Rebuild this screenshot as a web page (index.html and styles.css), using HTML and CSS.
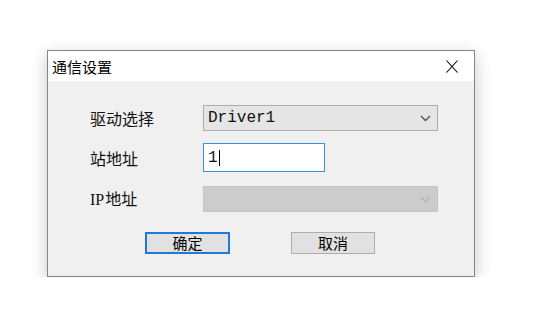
FILE: index.html
```html
<!DOCTYPE html>
<html lang="zh">
  <head>
    <meta charset="UTF-8" />
    <link rel="stylesheet" href="styles.css">
  </head>
  <body>
    <div class="page">
      <div class="dialog">
        <div class="titleBar">
          <span class="title">通信设置</span>
          <svg class="close" width="12" height="13" viewBox="0 0 12 13">
            <path d="M0.5 0.5 L11.5 12.5 M11.5 0.5 L0.5 12.5" stroke="#000" stroke-width="1.1" fill="none" />
          </svg>
        </div>
        <div class="body">
          <div class="row rowDriver">
            <span class="label">驱动选择</span>
            <div class="combo">
              <span class="value">Driver1</span>
              <svg class="chev" width="11" height="7" viewBox="0 0 11 7">
                <path d="M1 1 L5.5 5.5 L10 1" stroke="#555" stroke-width="1.4" fill="none" />
              </svg>
            </div>
          </div>
          <div class="row rowStation">
            <span class="label">站地址</span>
            <div class="textBox">
              <span class="value">1</span><span class="caret"></span>
            </div>
          </div>
          <div class="row rowIp">
            <span class="label"><span class="latin">IP</span>地址</span>
            <div class="combo disabled">
              <span class="value"></span>
              <svg class="chev" width="11" height="7" viewBox="0 0 11 7">
                <path d="M1 1 L5.5 5.5 L10 1" stroke="#b4b4b4" stroke-width="1.4" fill="none" />
              </svg>
            </div>
          </div>
          <div class="buttons">
            <div class="btn primary">确定</div>
            <div class="btn">取消</div>
          </div>
        </div>
      </div>
    </div>
  </body>
</html>
```

FILE: styles.css
```css
body {
  margin: 0;
  background-color: #ffffff;
  font-family: "Noto Sans CJK SC", sans-serif;
}
.page {
  padding: 50px 0 0 47px;
}
.dialog {
  width: 426px;
  height: 225px;
  border: 1px solid #858585;
  background-color: #f0f0f0;
  box-shadow: 0 5px 16px rgba(0, 0, 0, 0.22);
  display: flex;
  flex-direction: column;
}
.dialog .titleBar {
  height: 30px;
  background-color: #ffffff;
  display: flex;
  align-items: center;
  justify-content: space-between;
  padding: 0 16px 0 4px;
}
.dialog .titleBar .title {
  font-size: 15px;
  line-height: 18px;
  color: #000;
  margin-top: 1px;
}
.dialog .titleBar .close {
  display: block;
  margin-top: 1px;
}
.dialog .body {
  padding: 24px 0 0 42px;
}
.dialog .row {
  display: flex;
  align-items: center;
}
.dialog .row .label {
  width: 113px;
  font-size: 16px;
  line-height: 20px;
  color: #111;
}
.dialog .row .label .latin {
  font-family: "Liberation Serif", serif;
  font-size: 16px;
  margin-right: 1px;
}
.dialog .rowStation {
  margin-top: 12px;
}
.dialog .rowIp {
  margin-top: 14px;
}
.combo {
  width: 233px;
  height: 24px;
  border: 1px solid #adadad;
  background-color: #e5e5e5;
  display: flex;
  align-items: center;
  justify-content: space-between;
  padding: 0 6px 0 4px;
  box-sizing: content-box;
}
.combo.disabled {
  background-color: #cccccc;
  border-color: #c4c4c4;
}
.combo .value,
.textBox .value {
  font-family: "Liberation Mono", monospace;
  font-size: 16px;
  line-height: 20px;
  color: #111;
}
.combo .chev {
  display: block;
}
.combo {
  width: 223px;
}
.textBox {
  width: 116px;
  height: 27px;
  border: 1px solid #3d8ee0;
  background-color: #ffffff;
  display: flex;
  align-items: center;
  padding-left: 4px;
}
.textBox .caret {
  width: 1px;
  height: 16px;
  background-color: #000;
  margin-left: 1px;
}
.buttons {
  display: flex;
  gap: 61px;
  margin: 20px 0 0 55px;
}
.btn {
  width: 82px;
  height: 20px;
  border: 1px solid #adadad;
  background-color: #e1e1e1;
  font-size: 15px;
  line-height: 20px;
  text-align: center;
  color: #000;
}
.btn.primary {
  width: 81px;
  height: 18px;
  line-height: 18px;
  border: 2px solid #1e7ad6;
}
```
